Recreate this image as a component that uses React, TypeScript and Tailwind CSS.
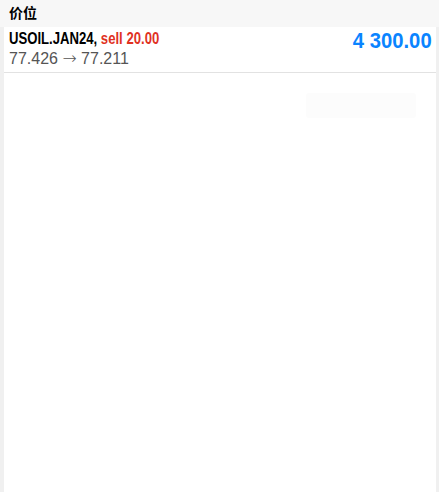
import React from "react";

const rows = [
  {
    symbol: "USOIL.JAN24",
    side: "sell 20.00",
    open: "77.426",
    close: "77.211",
    profit: "4 300.00",
  },
];

export default function App() {
  return (
    <div className="w-[439px] h-[492px] bg-[#f0f0f0] flex flex-col font-['Liberation_Sans','Noto_Sans_CJK_SC',sans-serif]">
      <div className="h-[27px] bg-[#f7f7f7] flex items-center px-[9px] text-[14px] font-bold text-black">
        价位
      </div>
      <div className="flex-1 ml-[4px] mr-[3px] bg-white flex flex-col">
        {rows.map((r) => (
          <div
            key={r.symbol}
            className="h-[46px] border-b border-[#e2e2e2] flex items-start justify-between pt-[2px] pl-[5px] pr-[4px]"
          >
            <div className="flex flex-col">
              <div className="text-[16px] font-bold leading-[19px] whitespace-nowrap origin-left scale-x-[0.82]">
                <span className="text-black">{r.symbol}, </span>
                <span className="text-[#e0311f]">{r.side}</span>
              </div>
              <div className="text-[16px] leading-[20px] text-[#555] whitespace-nowrap">
                {r.open}{" "}
                <span className="font-['DejaVu_Sans',sans-serif] text-[17px] font-light">→</span>{" "}
                {r.close}
              </div>
            </div>
            <div className="text-[22px] leading-[24px] font-bold text-[#0a84ff] whitespace-nowrap origin-right scale-x-[0.92]">
              {r.profit}
            </div>
          </div>
        ))}
        <div className="flex justify-end pr-[20px] pt-[20px]">
          <div className="w-[110px] h-[25px] bg-[#fcfcfc] rounded-[3px]" />
        </div>
      </div>
    </div>
  );
}
